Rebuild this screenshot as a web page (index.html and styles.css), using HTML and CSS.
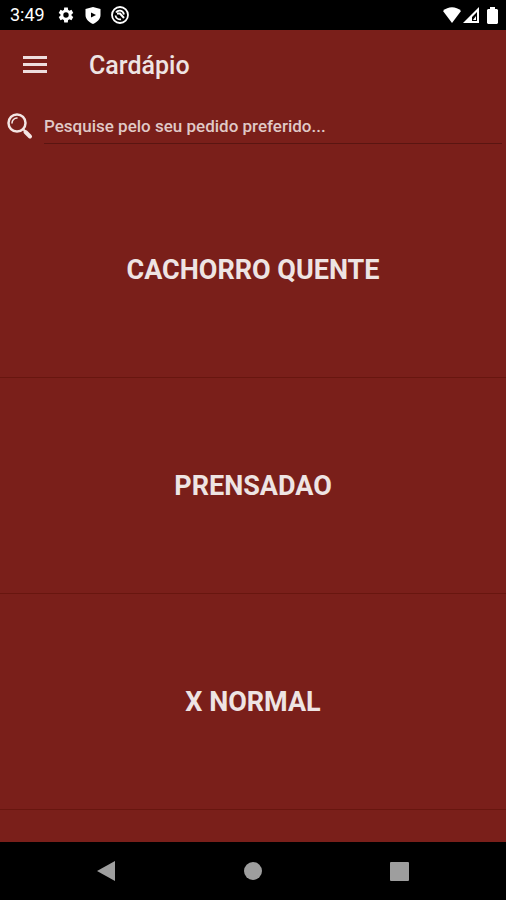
FILE: index.html
```html
<!DOCTYPE html>
<html lang="pt-BR">
<head>
    <meta charset="UTF-8">
    <meta name="viewport" content="width=device-width, initial-scale=1">
    <title>Cardápio</title>
    <link rel="stylesheet" href="styles.css">
</head>
<body>
<div class="status-bar">
    <span class="time">3:49</span>
    <div class="notifications">
        <svg width="18" height="18" viewBox="0 0 24 24">
            <path fill="#fff" fill-rule="evenodd" d="M19.4 13c.1-.7.1-1.300 0-2l2.300-1.800-2.400-4.100-2.800 1.100a8 8 0 0 0-1.700-1L14.400 2h-4.800l-.4 3.200a8 8 0 0 0-1.700 1L4.700 5.100 2.300 9.200 4.600 11c-.1.7-.1 1.300 0 2l-2.300 1.800 2.400 4.100 2.800-1.100a8 8 0 0 0 1.700 1l.4 3.200h4.800l.4-3.200a8 8 0 0 0 1.700-1l2.800 1.100 2.400-4.100zM12 15.600a3.600 3.600 0 1 1 0-7.200 3.600 3.600 0 0 1 0 7.200z"/>
        </svg>
        <svg width="18" height="18" viewBox="0 0 18 18">
            <path fill="#fff" fill-rule="evenodd" d="M9 1 16.500 3V9c0 4-3 7-7.500 9-4.500-2-7.500-5-7.500-9V3zM7 6.500v5l5-2.500z"/>
        </svg>
        <svg width="18" height="18" viewBox="0 0 18 18" fill="none" stroke="#fff">
            <circle cx="9" cy="9" r="8" stroke-width="1.800"/>
            <path stroke-width="1.800" d="M5 6.500C7 3.500 12 4 13 8.500M4.500 9.500A4.500 4.500 0 0 0 10 13.300"/>
            <path stroke-width="2" d="M6 7.500h3l4 4.500"/>
        </svg>
    </div>
    <div class="signals">
        <svg width="18" height="16" viewBox="0 0 18 16">
            <path fill="#fff" d="M0 4C5-1 13-1 18 4L9 16z"/>
        </svg>
        <svg width="16" height="16" viewBox="0 0 16 16">
            <path fill="#fff" fill-rule="evenodd" d="M16 0v16H0zM14 5l-5 5v4h5z"/>
            <path fill="#fff" d="M13 9v4h-3z"/>
        </svg>
        <svg class="battery" width="11" height="17" viewBox="0 0 11 17">
            <path fill="#fff" d="M3 0h5v2h2l1 1v13l-1 1H1l-1-1V3l1-1h2z"/>
        </svg>
    </div>
</div>

<header class="toolbar">
    <button class="menu-button" type="button" aria-label="Menu">
        <svg width="24" height="18" viewBox="0 0 24 18">
            <path fill="#eedede" d="M0 0h24v3H0zM0 7h24v3H0zM0 14h24v3H0z"/>
        </svg>
    </button>
    <h1>Cardápio</h1>
</header>

<form class="search">
    <label for="pedido" aria-label="Pesquisar">
        <svg width="26" height="28" viewBox="0 0 26 28" fill="none" stroke="#f4e6e4" stroke-linecap="round">
            <circle cx="10" cy="11" r="8.500" stroke-width="2.500"/>
            <path stroke-width="1.500" d="M5 11a5 5 0 0 1 5-5"/>
            <path stroke-width="2" d="M16 17l2 2"/>
            <path stroke-width="4" d="M18.500 20l4.500 4.500"/>
        </svg>
    </label>
    <input id="pedido" type="text" placeholder="Pesquise pelo seu pedido preferido...">
</form>

<main class="menu-list">
    <a class="menu-item" href="#">CACHORRO QUENTE</a>
    <a class="menu-item" href="#">PRENSADAO</a>
    <a class="menu-item" href="#">X NORMAL</a>
</main>

<nav class="nav-bar">
    <button type="button" aria-label="Voltar">
        <svg width="20" height="20" viewBox="0 0 20 20">
            <path fill="#9e9e9e" d="M18 0v20L0 10z"/>
        </svg>
    </button>
    <button type="button" aria-label="Início">
        <svg width="20" height="20" viewBox="0 0 20 20">
            <circle fill="#9e9e9e" cx="10" cy="10" r="9"/>
        </svg>
    </button>
    <button type="button" aria-label="Recentes">
        <svg width="20" height="20" viewBox="0 0 20 20">
            <rect fill="#9e9e9e" x="1" y="1" width="19" height="19" rx="1"/>
        </svg>
    </button>
</nav>
</body>
</html>
```

FILE: styles.css
```css
* {
    box-sizing: border-box;
    padding: 0;
    margin: 0;
}

body {
    display: flex;
    flex-direction: column;
    height: 100vh;
    background-color: #7a1f1a;
    color: #eee4e3;
    font-family: Roboto, "Liberation Sans", sans-serif;
}

svg {
    display: block;
}

button {
    border: none;
    background: none;
    cursor: pointer;
}

.status-bar {
    display: flex;
    flex-shrink: 0;
    align-items: center;
    height: 30px;
    padding: 0 8px 0 10px;
    background-color: #000;
    color: #fff;
}

.time {
    font-size: 18px;
    line-height: 20px;
}

.notifications {
    display: flex;
    gap: 9px;
    margin-left: 12px;
}

.signals {
    display: flex;
    align-items: center;
    gap: 2px;
    margin-left: auto;
}

.battery {
    margin-left: 6px;
}

.toolbar {
    display: flex;
    flex-shrink: 0;
    align-items: center;
    gap: 32px;
    height: 70px;
    padding: 0 13px;
}

.menu-button {
    padding: 10px;
}

h1 {
    padding-top: 2px;
    font-size: 25px;
    font-weight: 500;
    line-height: 32px;
}

.search {
    display: flex;
    flex-shrink: 0;
    align-items: center;
    gap: 11px;
    height: 62px;
    padding: 0 4px 10px 7px;
}

.search input {
    flex: 1;
    min-width: 0;
    height: 36px;
    border: none;
    border-bottom: 1px solid #5a1511;
    outline: none;
    background: none;
    color: inherit;
    font-family: inherit;
    font-size: 17px;
    font-weight: 500;
}

.search input::placeholder {
    color: #e0c9c7;
    opacity: 1;
}

.menu-list {
    flex: 1;
    min-height: 0;
    overflow: hidden;
}

.menu-item {
    display: flex;
    align-items: center;
    justify-content: center;
    height: 216px;
    border-bottom: 1px solid #68160f;
    color: #eee4e3;
    font-size: 27px;
    font-weight: bold;
    text-decoration: none;
}

.nav-bar {
    display: flex;
    flex-shrink: 0;
    align-items: center;
    justify-content: center;
    gap: 98px;
    height: 58px;
    background-color: #000;
}

.nav-bar button {
    padding: 14px;
}
```
